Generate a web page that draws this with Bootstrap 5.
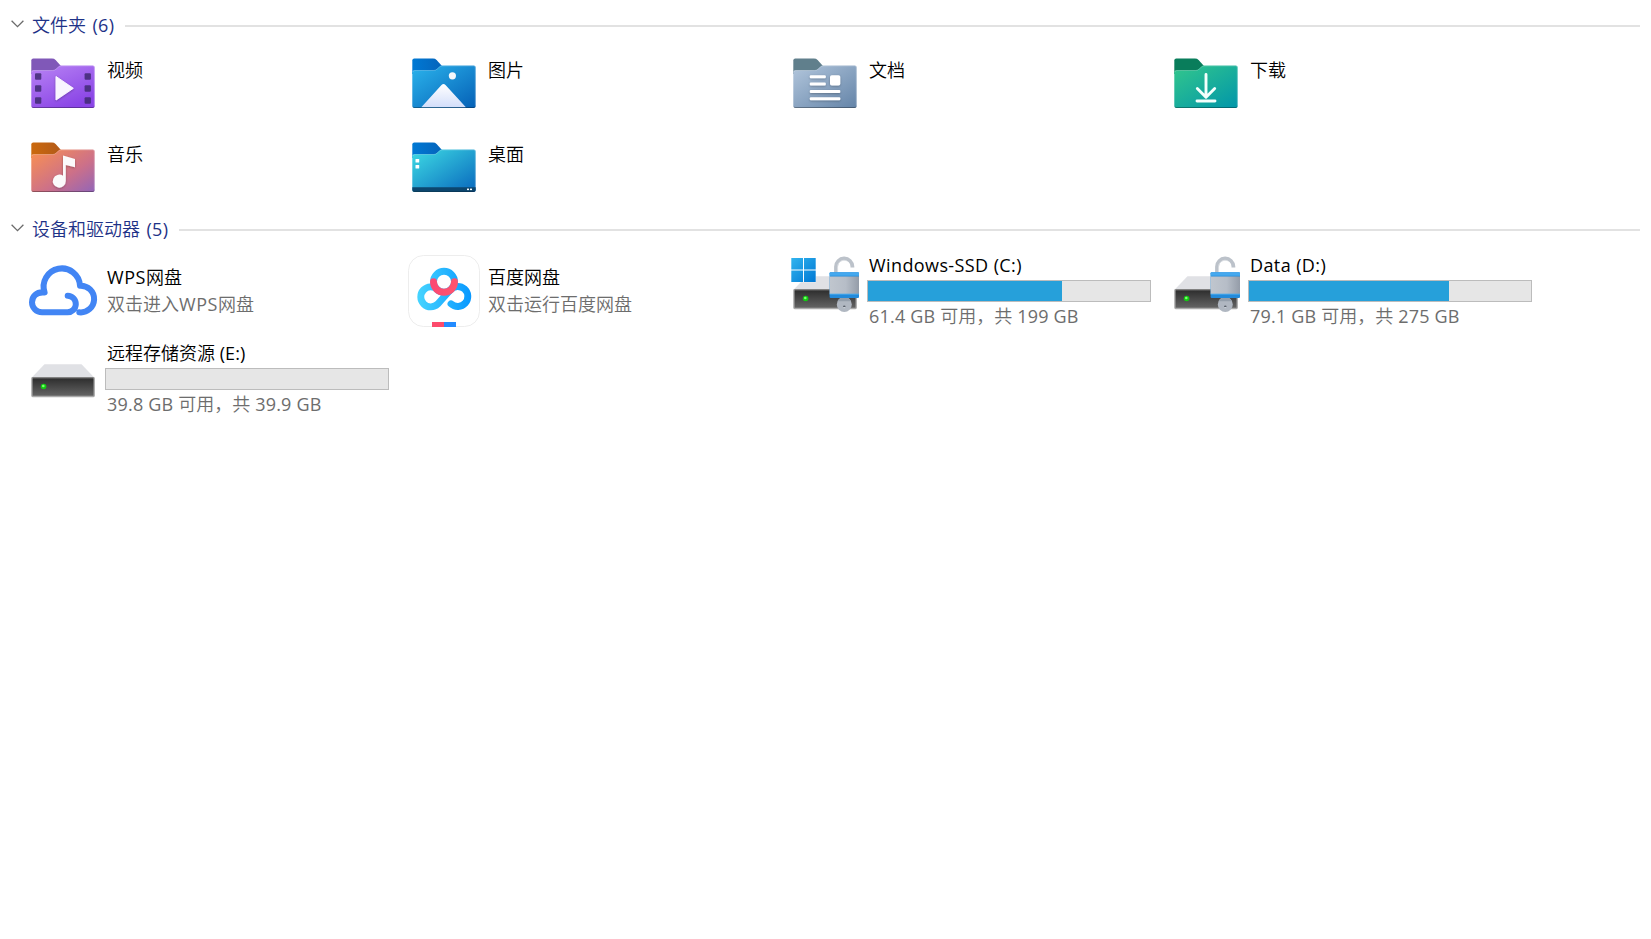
<!DOCTYPE html>
<html lang="zh-CN">
<head>
<meta charset="utf-8">
<title>此电脑</title>
<link href="https://cdn.jsdelivr.net/npm/bootstrap@5.3.0/dist/css/bootstrap.min.css" rel="stylesheet">
<style>
body{font-family:"Open Sans","Noto Sans CJK SC",sans-serif;font-size:18px;font-weight:350;line-height:27px;color:#000;background:#fff;overflow:hidden}
.lt{letter-spacing:.4px;font-weight:400}
.sub .lt{letter-spacing:.2px}
.lt.wps,.sub .lt.wps{letter-spacing:.55px}
.group-head .lt{letter-spacing:.3px;word-spacing:1.500px}
.group-head{height:47px;padding:4px 11px 0;color:#1e3287}
.group-head.second{height:52px;padding-top:1px}
.group-head svg{width:13px;height:8px;margin-right:8px;margin-top:-4px}
.group-head.second svg{margin-top:-3px}
.group-head .rule{height:2px;background:#e2e2e2;margin-left:11px}
.group-head.second .rule{margin-top:1px}
.tiles{display:grid;grid-template-columns:repeat(4,381px);padding-left:27px;row-gap:12px}
.tiles.drives{row-gap:16px}
.tile{height:72px}
.tile>svg{width:72px;height:72px;flex:none}
.info{margin-left:6px;width:284px;white-space:nowrap}
.info>div:not(.meter){padding-left:2px}
.folder-name{padding-top:10px}
.sub{color:#6d6d6d}
.meter{height:22px;border:1px solid #bcbcbc;background:#e6e6e6;margin:1px 0}
.meter div{height:100%;background:#26a0da}
</style>
</head>
<body>
<svg width="0" height="0" class="position-absolute">
<defs>
<linearGradient id="vid" x2=".6" y2="1"><stop stop-color="#b984f4"/><stop offset="1" stop-color="#8a45e6"/></linearGradient>
<linearGradient id="pic" x2="1" y2="1"><stop stop-color="#2bb4ec"/><stop offset="1" stop-color="#0560b6"/></linearGradient>
<linearGradient id="doc" x2="1" y2="1"><stop stop-color="#b2c6dc"/><stop offset="1" stop-color="#6484a8"/></linearGradient>
<linearGradient id="dl" x2=".9" y2="1"><stop stop-color="#33c78c"/><stop offset="1" stop-color="#0398a8"/></linearGradient>
<linearGradient id="mus" x2="1" y2="1"><stop stop-color="#fb9150"/><stop offset=".6" stop-color="#cc7089"/><stop offset="1" stop-color="#9265b8"/></linearGradient>
<linearGradient id="desk" x2="1" y2="1"><stop stop-color="#3edce4"/><stop offset="1" stop-color="#0867bd"/></linearGradient>
<linearGradient id="tabB" x2="1"><stop stop-color="#0079d4"/><stop offset="1" stop-color="#0564bb"/></linearGradient>
<linearGradient id="tabM" x2="1"><stop stop-color="#cb690e"/><stop offset="1" stop-color="#b25a18"/></linearGradient>
<linearGradient id="mount" x2="0" y2="1"><stop stop-color="#fff"/><stop offset="1" stop-color="#d3defa"/></linearGradient>
<linearGradient id="bd" gradientUnits="userSpaceOnUse" x1="9" x2="63"><stop stop-color="#47d5ff"/><stop offset="1" stop-color="#0898ff"/></linearGradient>
<linearGradient id="bdR" x2="1"><stop stop-color="#fc4a73"/><stop offset="1" stop-color="#ff536e"/></linearGradient>
<linearGradient id="front" x2="0" y2="1"><stop stop-color="#2c2c2c"/><stop offset="1" stop-color="#666"/></linearGradient>
<linearGradient id="metal" x2="1"><stop stop-color="#c0c6ce"/><stop offset=".55" stop-color="#b6bdc7"/><stop offset="1" stop-color="#949ca8"/></linearGradient>
<linearGradient id="win" x2="1" y2="1"><stop stop-color="#31b4ee"/><stop offset="1" stop-color="#0078d4"/></linearGradient>
<filter id="sh" x="-30%" y="-30%" width="160%" height="160%"><feDropShadow dx="0" dy=".8" stdDeviation=".8" flood-opacity=".3"/></filter>
<path id="tab" d="M4.3 27V13.5q0-2 2-2H25q2.200 0 3.600 1.400L34 19v8z"/>
<path id="body" d="M4.300 25.200q0-2 2-2H25.500q2 0 3.600-1.500l2.200-2q1.300-1.200 3-1.200H65.700q2 0 2 2V58.900q0 2-2 2H6.300q-2 0-2-2z"/>
<path id="edge" d="M4.700 25.200q0-1.700 2-1.700H25.500q2 0 3.600-1.400l2.200-2q1.300-1.200 3-1.200H65.700q1.600 0 1.600 2V58.700" fill="none" stroke="#fff" stroke-opacity=".28" stroke-width=".8"/>
<path id="base" d="M4.800 59.700q.5.800 1.700.8h59q1.200 0 1.700-.8" fill="none" stroke="#000" stroke-opacity=".35" stroke-width=".9"/>
<g id="drive">
<path d="M17.500 21.300h37L67.700 35H4.300z" fill="#e0e1e5"/>
<rect x="4.900" y="34.700" width="62.300" height="18.800" rx=".8" fill="url(#front)" stroke="#aaa" stroke-width="1.300"/>
<path d="M5.500 34.500h61" stroke="#777" stroke-width=".8"/>
<circle cx="16.600" cy="43.500" r="2.800" fill="#13c913"/><circle cx="16.300" cy="43" r="1.300" fill="#7dff70"/>
</g>
<g id="lock">
<path d="M47 19V11.800a8.200 8.200 0 0 1 16.400-.3V12.500" fill="none" stroke="#bcc2ca" stroke-width="3.800"/>
<path d="M48.600 19V11.800a6.500 6.500 0 0 1 9-6" fill="none" stroke="#dce0e4" stroke-width=".9"/>
<circle cx="55.300" cy="49.400" r="7.500" fill="#b0b7c1"/><path d="M48.600 46.300a7.500 7.500 0 0 1 13.400 0z" fill="#949eaa"/>
<path d="M54 51.900a1.300 1.300 0 0 1 2.600 0z" fill="#59616b"/><path d="M54.500 52.300h1.600v.8h-1.600z" fill="#d5d9df"/>
<rect x="40.600" y="17.300" width="29.400" height="25.800" rx="1" fill="#238ada"/>
<path d="M40.600 18.300q0-1 1-1H69q1 0 1 1v2.400H40.600z" fill="#45a8ee"/>
<rect x="40.600" y="21.500" width="29.400" height="17.400" fill="url(#metal)"/>
<path d="M40.600 39.200H70" stroke="#50b1f2" stroke-width=".8"/>
</g>
</defs>
</svg>

<main>
<header class="group-head d-flex align-items-center">
<svg viewBox="0 0 13 8"><path d="M.6.800 6.500 6.600 12.400.800" fill="none" stroke="#6b6b6b" stroke-width="1.300"/></svg>
<span>文件夹<span class="lt"> (6)</span></span><div class="rule flex-grow-1"></div>
</header>
<section class="tiles">
<div class="tile d-flex">
<svg viewBox="0 0 72 72"><use href="#tab" fill="#8058b8"/><use href="#body" fill="url(#vid)"/><use href="#edge"/><use href="#base"/>
<g fill="#402a72" fill-opacity=".85"><rect x="8" y="26.300" width="6.300" height="6.500" rx="1"/><rect x="8" y="38.300" width="6.300" height="6.500" rx="1"/><rect x="8" y="50.300" width="6.300" height="6.500" rx="1"/><rect x="57.600" y="26.300" width="6.300" height="6.500" rx="1"/><rect x="57.600" y="38.300" width="6.300" height="6.500" rx="1"/><rect x="57.600" y="50.300" width="6.300" height="6.500" rx="1"/></g>
<path d="M29 29.500 46.300 41.300 29 53z" fill="#f9f5ff" stroke="#f9f5ff" stroke-width="1" stroke-linejoin="round" filter="url(#sh)"/></svg>
<div class="info"><div class="folder-name">视频</div></div></div>
<div class="tile d-flex">
<svg viewBox="0 0 72 72"><use href="#tab" fill="url(#tabB)"/><use href="#body" fill="url(#pic)"/><use href="#edge"/>
<circle cx="44.400" cy="28.800" r="3.600" fill="#f4f7fb"/><path d="M13.300 60.200 33.500 38q2-2.200 4 0L57.900 60.200z" fill="url(#mount)"/><use href="#base"/></svg>
<div class="info"><div class="folder-name">图片</div></div></div>
<div class="tile d-flex">
<svg viewBox="0 0 72 72"><use href="#tab" fill="#607f8c"/><use href="#body" fill="url(#doc)"/><use href="#edge"/><use href="#base"/>
<g fill="#fff" filter="url(#sh)"><rect x="20.800" y="28.300" width="16" height="2.900" rx="1"/><rect x="20.800" y="35.500" width="16" height="2.900" rx="1"/><rect x="41" y="28.300" width="10.300" height="10.300" rx="1.800"/><rect x="20.800" y="43" width="30.500" height="2.900" rx="1"/><rect x="20.800" y="50.300" width="30.500" height="2.900" rx="1"/></g></svg>
<div class="info"><div class="folder-name">文档</div></div></div>
<div class="tile d-flex">
<svg viewBox="0 0 72 72"><use href="#tab" fill="#097d5b"/><use href="#body" fill="url(#dl)"/><use href="#edge"/><use href="#base"/>
<path d="M36 27.500V50M27.300 41.500 36 50.200 44.700 41.500M27 54H45" fill="none" stroke="#f4fffc" stroke-width="2.900" stroke-linecap="round" stroke-linejoin="round"/></svg>
<div class="info"><div class="folder-name">下载</div></div></div>
<div class="tile d-flex">
<svg viewBox="0 0 72 72"><use href="#tab" fill="url(#tabM)"/><use href="#body" fill="url(#mus)"/><use href="#edge"/><use href="#base"/>
<path d="M36 24.600 48 28v8.300l-9.200-2.200V50a6.500 6.500 0 1 1-2.800-5.200z" fill="#fbfafb" filter="url(#sh)"/></svg>
<div class="info"><div class="folder-name">音乐</div></div></div>
<div class="tile d-flex">
<svg viewBox="0 0 72 72"><use href="#tab" fill="url(#tabB)"/><use href="#body" fill="url(#desk)"/><use href="#edge"/>
<path d="M4.300 56.300H67.700v2.400q0 2-2 2H6.300q-2 0-2-2z" fill="#0c466e"/><use href="#base"/>
<g fill="#fff"><rect x="7.500" y="28" width="3.700" height="3.600" rx=".5"/><rect x="7.500" y="34" width="3.700" height="3.600" rx=".5"/><rect x="59" y="57.600" width="2" height="1.500"/><rect x="62" y="57.600" width="2" height="1.500"/></g></svg>
<div class="info"><div class="folder-name">桌面</div></div></div>
</section>

<header class="group-head second d-flex align-items-center">
<svg viewBox="0 0 13 8"><path d="M.6.800 6.500 6.600 12.400.800" fill="none" stroke="#6b6b6b" stroke-width="1.300"/></svg>
<span>设备和驱动器<span class="lt"> (5)</span></span><div class="rule flex-grow-1"></div>
</header>
<section class="tiles drives">
<div class="tile d-flex align-items-center">
<svg viewBox="0 0 72 72"><path d="M52.300 57.300A13.350 13.350 0 1 0 53 30.700A18.200 18.200 0 1 0 17.600 37.500C9 36.500 5 42 5 47.300A10 10 0 0 0 15 57.300H40.300A8.300 8.300 0 0 0 40.700 40.700" fill="none" stroke="#4285f4" stroke-width="6" stroke-linecap="round" stroke-linejoin="round"/></svg>
<div class="info"><div><span class="lt wps">WPS</span>网盘</div><div class="sub">双击进入<span class="lt wps">WPS</span>网盘</div></div></div>
<div class="tile d-flex align-items-center">
<svg viewBox="0 0 72 72"><rect x=".5" y=".5" width="71" height="71" rx="15" fill="#fff" stroke="#ededed"/>
<g fill="none" stroke="url(#bd)" stroke-width="6.900"><circle cx="36" cy="26.800" r="10.500"/><path d="M43 48.800A10 10 0 1 0 42.200 35L29.700 49.100A10 10 0 1 1 29.500 34.500" stroke-linecap="round"/></g>
<path d="M25.500 26.800a10.500 10.500 0 0 0 21 0" fill="none" stroke="url(#bdR)" stroke-width="6.900" stroke-linecap="round"/>
<path d="M24 67h12v5H24z" fill="#fc4a6c"/><path d="M36 67h12v5H36z" fill="#228bff"/></svg>
<div class="info"><div>百度网盘</div><div class="sub">双击运行百度网盘</div></div></div>
<div class="tile d-flex align-items-center">
<svg viewBox="0 0 72 72"><use href="#drive"/><path d="M2 2.700H27V27.300H2z" fill="#fff" fill-opacity=".7"/><path d="M2.300 3h11.700v11.500H2.300zM15 3h11.700v11.500H15zM2.300 15.500h11.700V27H2.300zM15 15.500h11.700V27H15z" fill="url(#win)"/><use href="#lock"/></svg>
<div class="info"><div class="lt">Windows-SSD (C:)</div><div class="meter"><div style="width:68.8%"></div></div><div class="sub"><span class="lt">61.4 GB </span>可用，共<span class="lt"> 199 GB</span></div></div></div>
<div class="tile d-flex align-items-center">
<svg viewBox="0 0 72 72"><use href="#drive"/><use href="#lock"/></svg>
<div class="info"><div class="lt">Data (D:)</div><div class="meter"><div style="width:70.9%"></div></div><div class="sub"><span class="lt">79.1 GB </span>可用，共<span class="lt"> 275 GB</span></div></div></div>
<div class="tile d-flex align-items-center">
<svg viewBox="0 0 72 72"><use href="#drive"/></svg>
<div class="info"><div>远程存储资源<span class="lt" style="letter-spacing:.05px"> (E:)</span></div><div class="meter"></div><div class="sub"><span class="lt">39.8 GB </span>可用，共<span class="lt"> 39.9 GB</span></div></div></div>
</section>
</main>
<script src="https://cdn.jsdelivr.net/npm/bootstrap@5.3.0/dist/js/bootstrap.bundle.min.js"></script>
</body>
</html>
